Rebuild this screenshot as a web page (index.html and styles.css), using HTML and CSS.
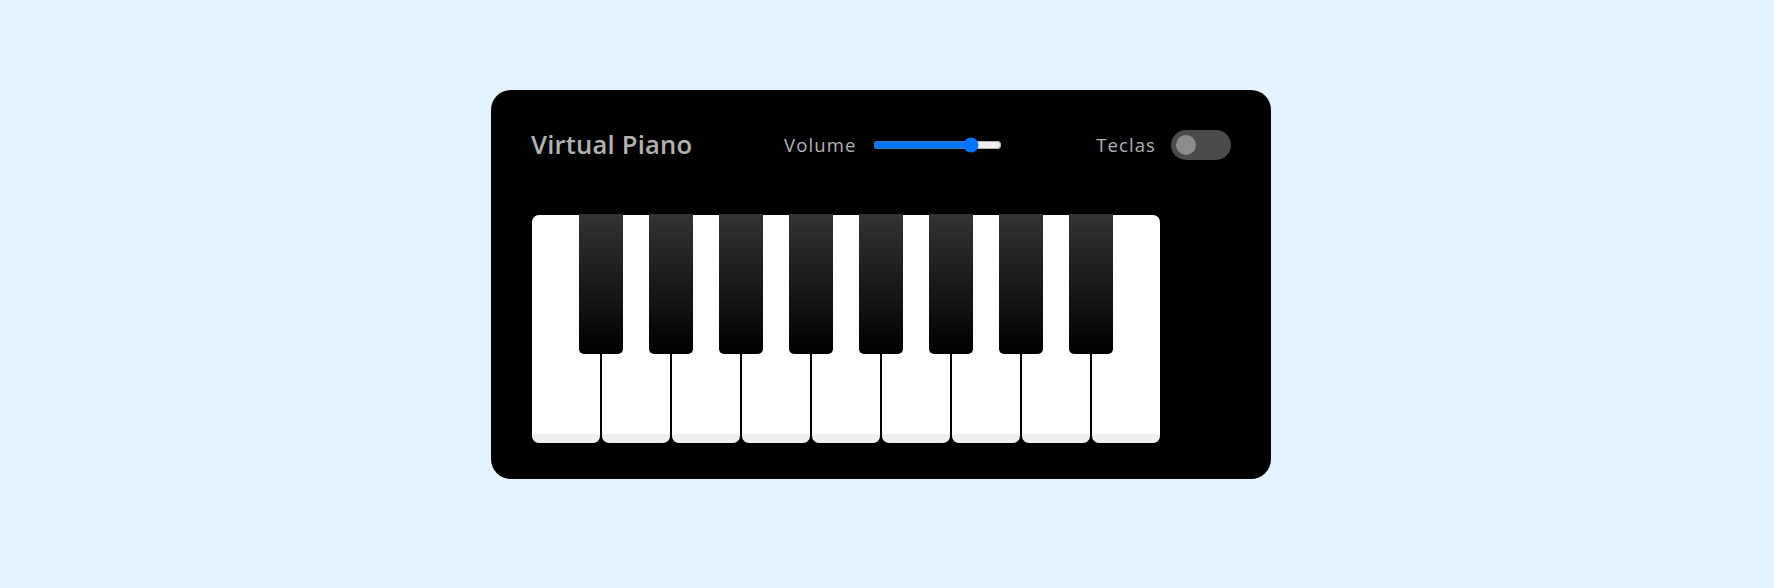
FILE: index.html
```html
<!DOCTYPE html>
<html lang="es">
<head>
<meta charset="utf-8">
<title>Virtual Piano</title>
<link rel="stylesheet" href="styles.css">
</head>
<body>
  <div class="wrapper">
    <header class="top">
      <h2 class="title">Virtual Piano</h2>
      <div class="column volume-slider">
        <span class="label">Volume</span>
        <input type="range" min="0" max="1" step="any" value="0.79">
      </div>
      <div class="column keys-checkbox">
        <span class="label">Teclas</span>
        <span class="toggle"><span class="knob"></span></span>
      </div>
    </header>
    <ul class="piano-keys">
      <li class="key white"></li>
      <li class="key black"></li>
      <li class="key white"></li>
      <li class="key black"></li>
      <li class="key white"></li>
      <li class="key black"></li>
      <li class="key white"></li>
      <li class="key black"></li>
      <li class="key white"></li>
      <li class="key black"></li>
      <li class="key white"></li>
      <li class="key black"></li>
      <li class="key white"></li>
      <li class="key black"></li>
      <li class="key white"></li>
      <li class="key black"></li>
      <li class="key white"></li>
    </ul>
  </div>
</body>
</html>
```
FILE: styles.css
```css
* {
  box-sizing: border-box;
}

body {
  margin: 0;
  min-height: 100vh;
  background: #E3F2FD;
  display: flex;
  justify-content: center;
  align-items: flex-start;
  padding: 90px 12px 0 0;
  font-family: "Open Sans", "Liberation Sans", sans-serif;
}

.wrapper {
  width: 780px;
  padding: 40px 40px 35px;
  border-radius: 20px;
  background: #000;
}

.top {
  display: flex;
  align-items: center;
  justify-content: space-between;
  height: 30px;
  color: #B2B2B2;
}

.title {
  margin: 0;
  font-size: 25.6px;
  font-weight: 600;
  letter-spacing: 0.2px;
  line-height: 30px;
}

.column {
  display: flex;
  align-items: center;
}

.label {
  font-size: 18.5px;
  font-weight: 400;
  letter-spacing: 1.1px;
  line-height: 30px;
  margin-right: 15px;
}

.volume-slider input {
  margin: 2px;
  width: 129px;
  outline: none;
}

.toggle {
  display: flex;
  align-items: center;
  width: 60px;
  height: 30px;
  padding-left: 5px;
  border-radius: 30px;
  background: #4B4B4B;
}

.knob {
  width: 20px;
  height: 20px;
  border-radius: 50%;
  background: #8C8C8C;
}

.piano-keys {
  display: flex;
  list-style: none;
  margin: 54px 0 0;
  padding: 0;
}

.key {
  position: relative;
}

.white {
  width: 70px;
  height: 230px;
  border-radius: 8px;
  border: 1px solid #000;
  background: linear-gradient(#fff 96%, #eee 4%);
}

.black {
  z-index: 2;
  width: 44px;
  height: 140px;
  margin: 0 -22px;
  border-radius: 0 0 5px 5px;
  background: linear-gradient(#333, #000);
}
```
